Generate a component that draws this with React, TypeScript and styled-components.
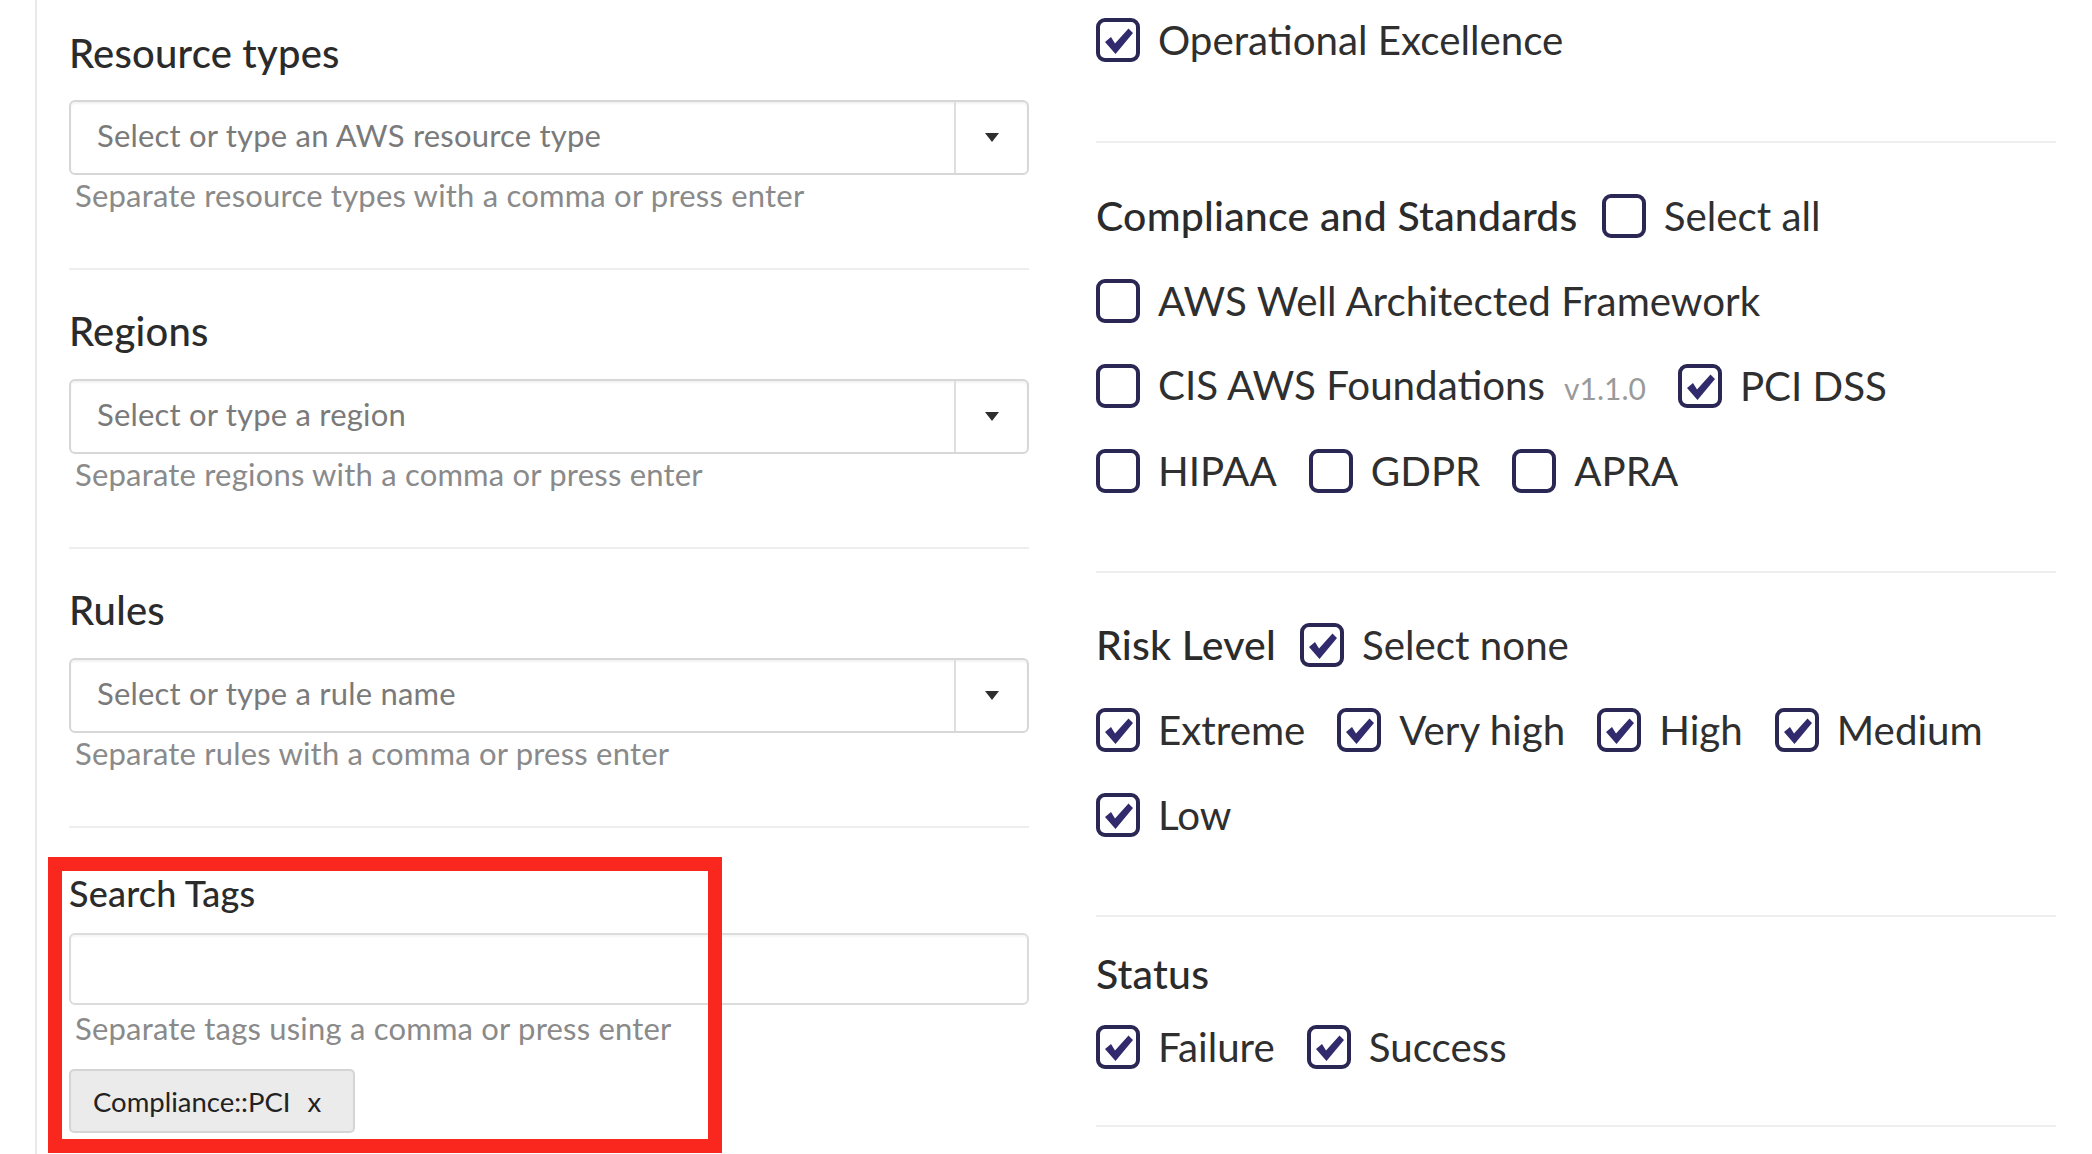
import React from "react";
import styled, { createGlobalStyle } from "styled-components";

const GlobalStyle = createGlobalStyle`
  html, body { margin: 0; padding: 0; background: #ffffff; }
  body { font-family: Lato, "Noto Sans", sans-serif; overflow: hidden; }
  * { box-sizing: border-box; }
`;

const Page = styled.div`
  height: 1154px;
  padding-left: 35px;
  display: flex;
  overflow: hidden;
`;

const Main = styled.main`
  flex: 1;
  border-left: 2px solid #e9e9e9;
  padding-left: 32px;
  display: grid;
  grid-template-columns: 960px 960px;
  column-gap: 67px;
  align-content: start;
`;

const Column = styled.div`
  display: flex;
  flex-direction: column;
`;

const Section = styled.section<{ $pt: number; $pb: number; $last?: boolean }>`
  position: relative;
  padding-top: ${(p) => p.$pt}px;
  padding-bottom: ${(p) => p.$pb}px;
  border-bottom: ${(p) => (p.$last ? "none" : "2px solid #eeeeee")};
`;

const FieldLabel = styled.h3<{ $size?: number; $lh?: number; $mb?: number }>`
  margin: 0 0 ${(p) => p.$mb ?? 24}px 0;
  font-size: ${(p) => p.$size ?? 40}px;
  line-height: ${(p) => p.$lh ?? 48}px;
  font-weight: 500;
  letter-spacing: 0.2px;
  color: #2b2b2b;
`;

const SelectBox = styled.div`
  display: flex;
  height: 75px;
  border: 2px solid #d7d7d7;
  border-radius: 6px;
  overflow: hidden;
  background: #fff;
  box-shadow: inset 0 2px 2px rgba(0, 0, 0, 0.05);
`;

const SelectInput = styled.input`
  flex: 1;
  min-width: 0;
  border: none;
  outline: none;
  background: transparent;
  padding: 0 0 6px 26px;
  font-family: Lato, "Noto Sans", sans-serif;
  font-size: 31px;
  letter-spacing: 0.2px;
  color: #333;
  &::placeholder { color: #7a7a7a; }
`;

const ArrowCell = styled.div`
  width: 73px;
  border-left: 2px solid #dedede;
  display: flex;
  align-items: center;
  justify-content: center;
`;

const Caret = styled.span`
  width: 0;
  height: 0;
  border-left: 7px solid transparent;
  border-right: 7px solid transparent;
  border-top: 9px solid #2e2e2e;
`;

const Help = styled.div<{ $mt?: number }>`
  margin-top: ${(p) => p.$mt ?? 2}px;
  padding-left: 6px;
  font-size: 31px;
  letter-spacing: 0.2px;
  line-height: 36px;
  color: #8a8a8a;
`;

const TagInput = styled.input`
  display: block;
  width: 100%;
  height: 72px;
  border: 2px solid #dcdcdc;
  border-radius: 6px;
  outline: none;
  background: #fff;
  box-shadow: inset 0 2px 2px rgba(0, 0, 0, 0.04);
  font-family: Lato, "Noto Sans", sans-serif;
  font-size: 31px;
  padding: 0 26px;
`;

const ChipRow = styled.div`
  margin-top: 23px;
  display: flex;
`;

const Chip = styled.span`
  display: inline-flex;
  align-items: center;
  gap: 17px;
  height: 64px;
  padding: 0 32px 0 22px;
  background: #ebebeb;
  border: 2px solid #d5d5d5;
  border-radius: 5px;
  font-size: 27.5px;
  color: #222;
`;

const Highlight = styled.div`
  position: absolute;
  top: 29px;
  left: -21px;
  width: 674px;
  height: 296px;
  border: 14px solid #f9271d;
  pointer-events: none;
`;

const Title = styled.h3`
  margin: 0;
  font-size: 41px;
  line-height: 44px;
  font-weight: 500;
  letter-spacing: 0.2px;
  color: #2b2b2b;
  white-space: nowrap;
`;

const TitleRow = styled.div`
  display: flex;
  align-items: center;
  gap: 24px;
  height: 44px;
`;

const OptionList = styled.div<{ $mt?: number }>`
  display: flex;
  flex-direction: column;
  gap: 41px;
  margin-top: ${(p) => p.$mt ?? 0}px;
`;

const OptionRow = styled.div`
  display: flex;
  align-items: center;
  column-gap: 32px;
  height: 44px;
`;

const OptionLabel = styled.label`
  display: inline-flex;
  align-items: center;
  gap: 18px;
  font-size: 40.3px;
  line-height: 44px;
  color: #2f2f2f;
  white-space: nowrap;
  cursor: pointer;
`;

const Version = styled.span`
  margin-left: 19px;
  font-size: 30px;
  color: #9a9a9a;
`;

const Box = styled.span`
  flex: none;
  width: 44px;
  height: 44px;
  border: 4px solid #2a2754;
  border-radius: 9px;
  display: flex;
  align-items: center;
  justify-content: center;
  background: #fff;
`;

const CheckMark = () => (
  <svg width="36" height="36" viewBox="0 0 36 36">
    <polygon points="5,20 11,15 15,21.5 28.5,6.5 33,11 15.5,32" fill="#312a6d" />
  </svg>
);

const Option = ({ label, checked, extra }: { label: string; checked?: boolean; extra?: string }) => (
  <OptionLabel>
    <Box>{checked ? <CheckMark /> : null}</Box>
    <span>
      {label}
      {extra ? <Version>{extra}</Version> : null}
    </span>
  </OptionLabel>
);

const SelectField = ({
  label,
  placeholder,
  help,
  pt,
  mb,
}: {
  label: string;
  placeholder: string;
  help: string;
  pt: number;
  mb?: number;
}) => (
  <Section $pt={pt} $pb={55}>
    <FieldLabel $mb={mb}>{label}</FieldLabel>
    <SelectBox>
      <SelectInput placeholder={placeholder} />
      <ArrowCell>
        <Caret />
      </ArrowCell>
    </SelectBox>
    <Help>{help}</Help>
  </Section>
);

export default function App() {
  return (
    <>
      <GlobalStyle />
      <Page>
        <Main>
          <Column>
            <SelectField
              pt={29}
              mb={23}
              label="Resource types"
              placeholder="Select or type an AWS resource type"
              help="Separate resource types with a comma or press enter"
            />
            <SelectField
              pt={37}
              label="Regions"
              placeholder="Select or type a region"
              help="Separate regions with a comma or press enter"
            />
            <SelectField
              pt={37}
              label="Rules"
              placeholder="Select or type a rule name"
              help="Separate rules with a comma or press enter"
            />
            <Section $pt={43} $pb={0} $last>
              <FieldLabel $size={36} $lh={44} $mb={18}>
                Search Tags
              </FieldLabel>
              <TagInput />
              <Help $mt={5}>Separate tags using a comma or press enter</Help>
              <ChipRow>
                <Chip>
                  <span>Compliance::PCI</span>
                  <span>x</span>
                </Chip>
              </ChipRow>
              <Highlight />
            </Section>
          </Column>

          <Column>
            <Section $pt={18} $pb={79}>
              <OptionList>
                <OptionRow>
                  <Option label="Operational Excellence" checked />
                </OptionRow>
              </OptionList>
            </Section>

            <Section $pt={51} $pb={78}>
              <TitleRow>
                <Title>Compliance and Standards</Title>
                <Option label="Select all" />
              </TitleRow>
              <OptionList $mt={41}>
                <OptionRow>
                  <Option label="AWS Well Architected Framework" />
                </OptionRow>
                <OptionRow>
                  <Option label="CIS AWS Foundations" extra="v1.1.0" />
                  <Option label="PCI DSS" checked />
                </OptionRow>
                <OptionRow>
                  <Option label="HIPAA" />
                  <Option label="GDPR" />
                  <Option label="APRA" />
                </OptionRow>
              </OptionList>
            </Section>

            <Section $pt={50} $pb={78}>
              <TitleRow>
                <Title>Risk Level</Title>
                <Option label="Select none" checked />
              </TitleRow>
              <OptionList $mt={41}>
                <OptionRow>
                  <Option label="Extreme" checked />
                  <Option label="Very high" checked />
                  <Option label="High" checked />
                  <Option label="Medium" checked />
                </OptionRow>
                <OptionRow>
                  <Option label="Low" checked />
                </OptionRow>
              </OptionList>
            </Section>

            <Section $pt={35} $pb={56}>
              <Title>Status</Title>
              <OptionList $mt={29}>
                <OptionRow>
                  <Option label="Failure" checked />
                  <Option label="Success" checked />
                </OptionRow>
              </OptionList>
            </Section>
          </Column>
        </Main>
      </Page>
    </>
  );
}
